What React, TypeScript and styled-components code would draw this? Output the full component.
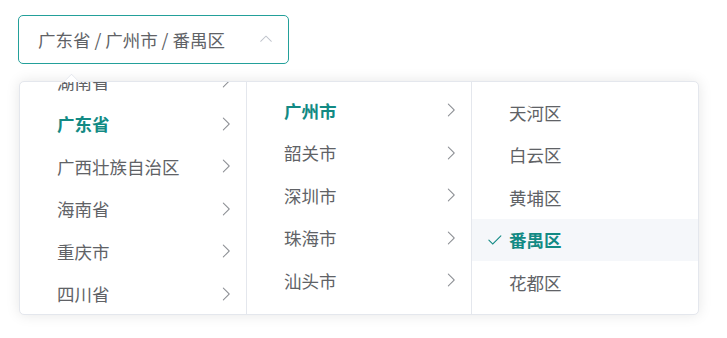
import styled, { createGlobalStyle } from "styled-components";

const GlobalStyle = createGlobalStyle`
  html, body {
    margin: 0;
    background: #fff;
  }
  body {
    font-family: "Noto Sans CJK SC", "Noto Sans", sans-serif;
  }
`;

const primary = "#128a84";

const provinces = ["湖南省", "广东省", "广西壮族自治区", "海南省", "重庆市", "四川省"];
const cities = ["广州市", "韶关市", "深圳市", "珠海市", "汕头市"];
const districts = ["天河区", "白云区", "黄埔区", "番禺区", "花都区"];

const ArrowRight = () => (
  <svg width="18" height="18" viewBox="0 0 1024 1024" fill="currentColor">
    <path d="M340.864 149.312a30.592 30.592 0 0 0 0 42.752L652.736 512 340.864 831.872a30.592 30.592 0 0 0 0 42.752 29.12 29.12 0 0 0 41.728 0L714.24 534.336a32 32 0 0 0 0-44.672L382.592 149.376a29.12 29.12 0 0 0-41.728 0z" />
  </svg>
);

const Check = () => (
  <svg width="17" height="17" viewBox="0 0 1024 1024" fill="currentColor">
    <path d="M406.656 706.944 195.84 496.256a32 32 0 1 0-45.248 45.248l256 256 512-512a32 32 0 0 0-45.248-45.248L406.592 706.944z" />
  </svg>
);

const ArrowUp = () => (
  <svg width="16" height="16" viewBox="0 0 1024 1024" fill="currentColor">
    <path
      transform="rotate(180 512 512)"
      d="M831.872 340.864 512 652.672 192.128 340.864a30.592 30.592 0 0 0-42.752 0 29.12 29.12 0 0 0 0 41.6L489.664 714.24a32 32 0 0 0 44.672 0l340.288-331.712a29.12 29.12 0 0 0 0-41.728 30.592 30.592 0 0 0-42.752 0z"
    />
  </svg>
);

export default function App() {
  return (
    <Page>
      <GlobalStyle />
      <Cascader>
        <InputBox>
          <InputText>广东省 / 广州市 / 番禺区</InputText>
          <Suffix>
            <ArrowUp />
          </Suffix>
        </InputBox>
        <Panel>
          <PopperArrow />
          <Menu $width={227}>
            <MenuList $offset={-31}>
              {provinces.map((p) => (
                <Node key={p}>
                  <Label $active={p === "广东省"}>{p}</Label>
                  <NodeArrow>
                    <ArrowRight />
                  </NodeArrow>
                </Node>
              ))}
            </MenuList>
          </Menu>
          <Menu $width={225}>
            <MenuList $offset={-2}>
              {cities.map((c) => (
                <Node key={c}>
                  <Label $active={c === "广州市"}>{c}</Label>
                  <NodeArrow>
                    <ArrowRight />
                  </NodeArrow>
                </Node>
              ))}
            </MenuList>
          </Menu>
          <Menu $last>
            <MenuList $offset={0}>
              {districts.map((d) => (
                <Node key={d} $hover={d === "番禺区"}>
                  {d === "番禺区" && (
                    <CheckMark>
                      <Check />
                    </CheckMark>
                  )}
                  <Label $active={d === "番禺区"}>{d}</Label>
                </Node>
              ))}
            </MenuList>
          </Menu>
        </Panel>
      </Cascader>
    </Page>
  );
}

const Page = styled.div`
  padding: 15px 0 0 18px;
  min-height: 338px;
  box-sizing: border-box;
`;

const Cascader = styled.div`
  display: flex;
  flex-direction: column;
  gap: 17px;
  align-items: flex-start;
`;

const InputBox = styled.div`
  width: 271px;
  height: 49px;
  box-sizing: border-box;
  border: 1px solid #23a09a;
  border-radius: 5px;
  display: flex;
  align-items: center;
  padding: 0 14px 0 19px;
  background: #fff;
`;

const InputText = styled.span`
  flex: 1;
  font-size: 17.5px;
  color: #606266;
  white-space: nowrap;
`;

const Suffix = styled.span`
  display: flex;
  color: #c0c4cc;
  margin-top: -2px;
`;

const Panel = styled.div`
  position: relative;
  margin-left: 1px;
  width: 680px;
  height: 234px;
  box-sizing: border-box;
  border: 1px solid #e4e7ed;
  border-radius: 5px;
  background: #fff;
  box-shadow: 0 0 14px rgba(0, 0, 0, 0.1);
  display: flex;
`;

const PopperArrow = styled.span`
  position: absolute;
  top: -6px;
  left: 45px;
  width: 11px;
  height: 11px;
  background: #fff;
  border: 1px solid #e4e7ed;
  border-right-color: transparent;
  border-bottom-color: transparent;
  transform: rotate(45deg);
  border-top-left-radius: 2px;
`;

const Menu = styled.div<{ $last?: boolean; $width?: number }>`
  width: ${(p) => (p.$width ? `${p.$width}px` : "auto")};
  flex: ${(p) => (p.$last ? 1 : "none")};
  box-sizing: border-box;
  border-right: ${(p) => (p.$last ? "none" : "1px solid #e4e7ed")};
  overflow: hidden;
  position: relative;
  z-index: 1;
`;

const MenuList = styled.ul<{ $offset: number }>`
  list-style: none;
  margin: ${(p) => p.$offset}px 0 0;
  padding: 9px 0 0;
`;

const Node = styled.li<{ $hover?: boolean }>`
  position: relative;
  height: 42.5px;
  display: flex;
  align-items: center;
  padding: 0 11px 0 37px;
  background: ${(p) => (p.$hover ? "#f5f7fa" : "transparent")};
`;

const Label = styled.span<{ $active?: boolean }>`
  flex: 1;
  font-size: 17.5px;
  color: ${(p) => (p.$active ? primary : "#606266")};
  font-weight: ${(p) => (p.$active ? 700 : 400)};
  white-space: nowrap;
`;

const NodeArrow = styled.span`
  display: flex;
  color: #8d9095;
`;

const CheckMark = styled.span`
  position: absolute;
  left: 14px;
  top: 50%;
  transform: translateY(-50%);
  display: flex;
  color: ${primary};
`;
